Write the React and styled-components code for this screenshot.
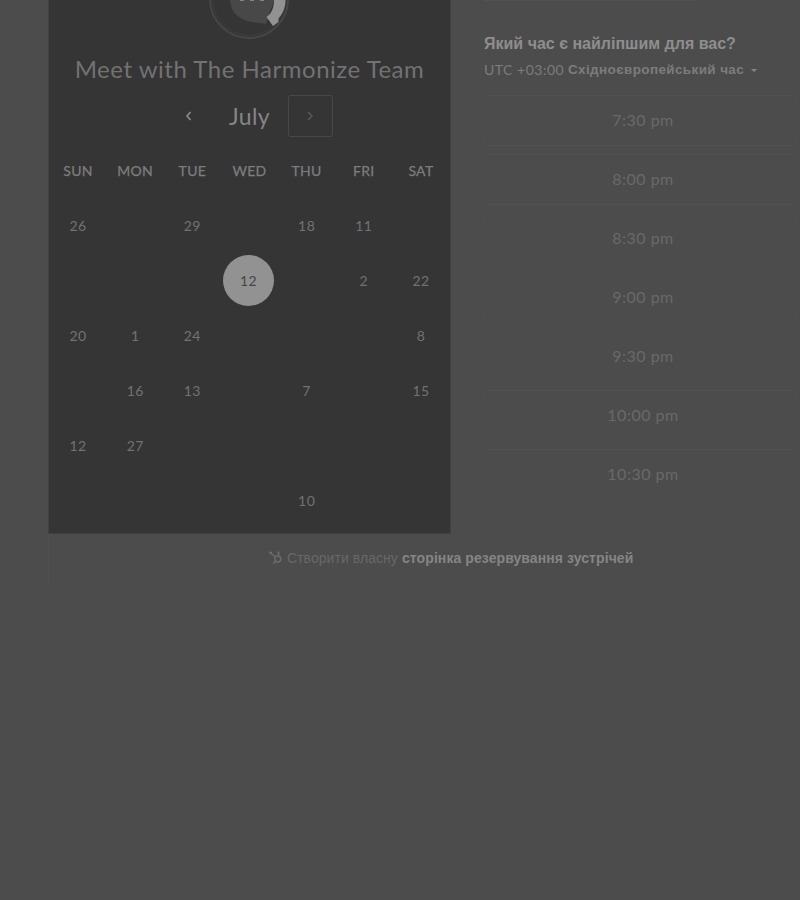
import React from "react";
import styled, { createGlobalStyle } from "styled-components";

const GlobalStyle = createGlobalStyle`
  * { box-sizing: border-box; }
  body { margin: 0; background: #4c4c4c; }
`;

const Page = styled.main`
  width: 800px;
  height: 900px;
  overflow: hidden;
  background: #4c4c4c;
  font-family: Lato, "Liberation Sans", sans-serif;
  color: #838383;
`;

const Booking = styled.div`
  display: flex;
  height: 534px;
  padding-left: 48px;
`;

const CalendarPanel = styled.section`
  width: 403px;
  height: 534px;
  flex: none;
  background: #353535;
  border: solid #414141;
  border-width: 0 1px 1px;
  display: flex;
  flex-direction: column;
`;

const Logo = styled.svg`
  display: block;
  width: 90px;
  height: 46px;
  margin-left: 155px;
  flex: none;
`;

const Title = styled.h1`
  margin: 0;
  height: 48px;
  font-size: 24px;
  font-weight: 400;
  line-height: 46px;
  letter-spacing: 0.52px;
  text-align: center;
  white-space: nowrap;
  color: #727272;
`;

const MonthNav = styled.div`
  display: flex;
  align-items: center;
  justify-content: center;
  height: 44px;
  width: 400px;
`;

const NavButton = styled.button`
  width: 45px;
  height: 42px;
  padding: 0;
  display: flex;
  align-items: center;
  justify-content: center;
  background: none;
  border: 1px solid ${(p) => (p.$framed ? "#484848" : "transparent")};
  border-radius: 3px;
  color: ${(p) => (p.$framed ? "#555" : "#8c8c8c")};
`;

const Month = styled.h2`
  margin: 0;
  width: 77px;
  padding-left: 1px;
  text-align: center;
  font-size: 23px;
  line-height: 42px;
  font-weight: 400;
  letter-spacing: 0.4px;
  color: #868686;
`;

const Grid = styled.div`
  display: grid;
  grid-template-columns: repeat(7, 57.15px);
  grid-template-rows: 57px repeat(6, 55px);
  margin: 3px 0 0 0.5px;
`;

const Weekday = styled.div`
  display: flex;
  align-items: center;
  justify-content: center;
  padding-top: 2px;
  font-size: 14px;
  letter-spacing: 0.3px;
  color: #7d7d7d;
  -webkit-text-stroke: 0.25px #7d7d7d;
`;

const Day = styled.div`
  display: flex;
  align-items: center;
  justify-content: center;
  font-size: 14px;
  letter-spacing: 0.4px;
  color: #727272;
`;

const SelectedDay = styled.span`
  width: 51px;
  height: 51px;
  margin-right: 2px;
  border-radius: 50%;
  background: #929292;
  color: #464646;
  display: flex;
  align-items: center;
  justify-content: center;
`;

const Times = styled.section`
  margin-left: 33px;
  width: 318px;
  flex: none;
`;

const PreviousField = styled.div`
  width: 214px;
  height: 1px;
  background: #515151;
`;

const Question = styled.h3`
  margin: 32px 0 0;
  height: 22px;
  font: bold 16px/22px "Liberation Sans", sans-serif;
  white-space: nowrap;
  color: #8e8e8e;
`;

const Timezone = styled.div`
  display: flex;
  align-items: center;
  height: 20px;
  margin: 5px 0 15px;
  font-size: 14px;
  line-height: 20px;
  white-space: nowrap;
  color: #7c7c7c;
`;

const Offset = styled.span`
  width: 84px;
  height: 20px;
  letter-spacing: 0.5px;
`;

const Zone = styled.strong`
  width: 176px;
  font: bold 13.5px/20px "Liberation Sans", sans-serif;
  letter-spacing: 0.37px;
`;

const Caret = styled.span`
  margin-left: 7px;
  border: 3.5px solid transparent;
  border-top: 3.5px solid #858585;
  border-bottom: 0;
`;

const Slots = styled.div`
  display: grid;
  grid-auto-rows: 51px;
  row-gap: 8px;
`;

const Slot = styled.button`
  margin-right: 5px;
  padding: 0 0 2px 5px;
  border: 1px solid #4e4e4e;
  border-top-color: ${(p) => (p.$top ? "#515151" : "#4d4d4d")};
  border-bottom-color: ${(p) => (p.$bottom ? "#515151" : "#4d4d4d")};
  border-radius: 4px;
  background: none;
  font: 400 16px Lato, sans-serif;
  letter-spacing: 0.5px;
  color: #696969;
`;

const Footer = styled.footer`
  display: flex;
  align-items: center;
  width: 752px;
  height: 52px;
  margin-left: 48px;
  padding: 0 0 4px 220px;
  border-left: 1px solid #4f4f4f;
  font: 14px/20px "Liberation Sans", sans-serif;
  white-space: nowrap;
  color: #686868;
`;

const Sprocket = styled.svg`
  width: 14px;
  height: 14px;
  margin-right: 4px;
  flex: none;
`;

const FooterText = styled.span`
  width: 115px;
  letter-spacing: 0.05px;
`;

const FooterLink = styled.strong`
  letter-spacing: 0.08px;
  color: #858585;
`;

const weekdays = ["SUN", "MON", "TUE", "WED", "THU", "FRI", "SAT"];
const days = [
  "26", "", "29", "", "18", "11", "",
  "", "", "", "12", "", "2", "22",
  "20", "1", "24", "", "", "", "8",
  "", "16", "13", "", "7", "", "15",
  "12", "27", "", "", "", "", "",
  "", "", "", "", "10", "", "",
];
const slots = [
  { time: "7:30 pm", top: true, bottom: true },
  { time: "8:00 pm", top: true, bottom: true },
  { time: "8:30 pm" },
  { time: "9:00 pm" },
  { time: "9:30 pm" },
  { time: "10:00 pm", top: true },
  { time: "10:30 pm", top: true },
];

function Chevron({ flip }) {
  return (
    <svg width="8" height="12" viewBox="0 0 8 12" fill="none" stroke="currentColor" strokeWidth="1.6">
      <path d={flip ? "M2 2 L6 6 L2 10" : "M6.5 2 L3 6 L6.5 10"} />
    </svg>
  );
}

export default function App() {
  return (
    <Page>
      <GlobalStyle />
      <Booking>
        <CalendarPanel>
          <Logo viewBox="0 0 90 46">
            <circle cx="45" cy="-1" r="39" fill="none" stroke="#464646" strokeWidth="2" />
            <circle cx="45" cy="-1" r="36.5" fill="none" stroke="#3e3e3e" />
            <path d="M26 0 C27 14 36 20 48 22 L62 24 L70 0 Z" fill="#484848" />
            <path d="M81.5 0 C81.5 8 78.5 14 74.5 18.5 L74.5 22 L69 26 L62.5 17 L66 14 C69 10 70 5 70 0 Z" fill="#929292" />
            <path d="M36 0h4M46 0h4M56 0h4" stroke="#858585" strokeWidth="2" />
          </Logo>
          <Title>Meet with The Harmonize Team</Title>
          <MonthNav>
            <NavButton aria-label="Previous month"><Chevron /></NavButton>
            <Month>July</Month>
            <NavButton $framed aria-label="Next month"><Chevron flip /></NavButton>
          </MonthNav>
          <Grid>
            {weekdays.map((d) => <Weekday key={d}>{d}</Weekday>)}
            {days.map((d, i) => (
              <Day key={i}>{i === 10 ? <SelectedDay>{d}</SelectedDay> : d}</Day>
            ))}
          </Grid>
        </CalendarPanel>
        <Times>
          <PreviousField />
          <Question>Який час є найліпшим для вас?</Question>
          <Timezone>
            <Offset>UTC +03:00</Offset>
            <Zone>Східноєвропейський час</Zone>
            <Caret />
          </Timezone>
          <Slots>
            {slots.map((s) => <Slot key={s.time} $top={s.top} $bottom={s.bottom}>{s.time}</Slot>)}
          </Slots>
        </Times>
      </Booking>
      <Footer>
        <Sprocket viewBox="0 0 14 14" fill="none" stroke="#6c6c6c" strokeWidth="1.4">
          <circle cx="8.8" cy="8" r="3" />
          <path d="M1 1.5 L6.5 6 M9.5 5 V1.5 M6.6 10.3 L4 12.8" />
          <circle cx="1.6" cy="1.8" r=".7" />
          <circle cx="9.5" cy="1.7" r=".5" />
        </Sprocket>
        <FooterText>Створити власну</FooterText>
        <FooterLink>сторінка резервування зустрічей</FooterLink>
      </Footer>
    </Page>
  );
}
